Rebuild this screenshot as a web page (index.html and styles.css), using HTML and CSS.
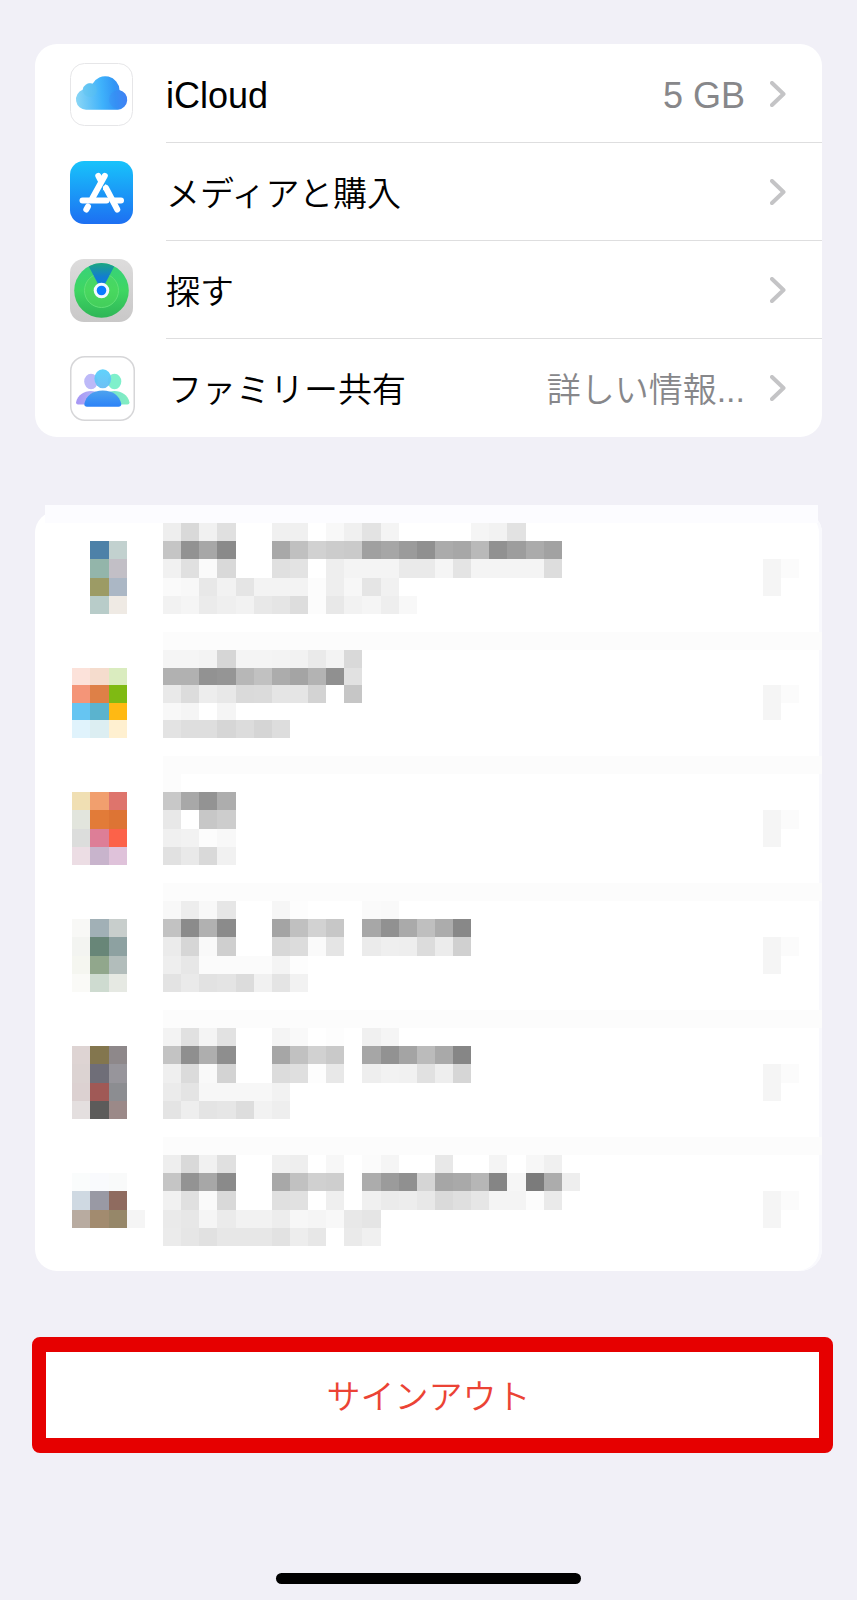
FILE: index.html
```html
<!DOCTYPE html>
<html lang="ja">
  <head>
    <meta charset="UTF-8" />
    <meta name="viewport" content="width=device-width, initial-scale=1.0" />
    <title>Apple ID</title>
    <link rel="stylesheet" href="styles.css">
  </head>
  <body>
    <main class="settings">
      <!-- Services -->
      <nav class="card services">
        <a class="service" href="#icloud">
          <svg class="app-icon" viewBox="0 0 63 63" aria-hidden="true">
            <defs>
              <linearGradient id="cloud" x1="6" y1="36" x2="58" y2="32" gradientUnits="userSpaceOnUse">
                <stop offset="0" stop-color="#8ad6f5" />
                <stop offset="0.5" stop-color="#3fb2fb" />
                <stop offset="0.75" stop-color="#3296f5" />
                <stop offset="1" stop-color="#4380f4" />
              </linearGradient>
            </defs>
            <rect x="0.5" y="0.5" width="62" height="62" rx="14" fill="#fff" stroke="#e6e6e8" />
            <path d="M16 46.700A10.300 10.300 0 0 1 12.600 26.800A7.600 7.600 0 0 1 22.600 20.800A14.300 14.300 0 0 1 49.500 27A10 10 0 0 1 48 46.700Z" fill="url(#cloud)" />
            <circle cx="20" cy="27" r="7" fill="#5cc4ec" opacity="0.35" />
            <circle cx="48" cy="36.500" r="9" fill="#3e7ff2" opacity="0.25" />
          </svg>
          <span class="name latin">iCloud</span>
          <span class="value latin">5 GB</span>
          <svg class="chevron" viewBox="0 0 16 26" aria-hidden="true"><path d="M2 2L13.500 13L2 24" /></svg>
        </a>
        <a class="service" href="#media">
          <svg class="app-icon" viewBox="0 0 63 63" aria-hidden="true">
            <defs>
              <linearGradient id="store" x1="0" y1="0" x2="0" y2="1">
                <stop offset="0" stop-color="#18c3fb" />
                <stop offset="1" stop-color="#1d6ff2" />
              </linearGradient>
            </defs>
            <rect width="63" height="63" rx="14" fill="url(#store)" />
            <g fill="none" stroke="#fff" stroke-width="6" stroke-linecap="round">
              <path d="M34.800 14.800L22.500 37" />
              <path d="M28.300 14.800L30.500 19" />
              <path d="M18 45.500L16.300 48.500" />
              <path d="M12.500 39.500H36.500" />
              <path d="M44 39.500H51" />
              <path d="M36 27L47.300 48.500" />
            </g>
            <path d="M32.600 29.500L35.500 23L39 27Z" fill="#fff" />
          </svg>
          <span class="name">メディアと購入</span>
          <svg class="chevron" viewBox="0 0 16 26" aria-hidden="true"><path d="M2 2L13.500 13L2 24" /></svg>
        </a>
        <a class="service" href="#find">
          <svg class="app-icon" viewBox="0 0 63 63" aria-hidden="true">
            <defs>
              <linearGradient id="plate" x1="0" y1="0" x2="0" y2="1">
                <stop offset="0" stop-color="#dddcdc" />
                <stop offset="1" stop-color="#c9c8c8" />
              </linearGradient>
              <linearGradient id="radar" x1="0" y1="0" x2="0" y2="1">
                <stop offset="0" stop-color="#37d27b" />
                <stop offset="0.5" stop-color="#3fd662" />
                <stop offset="1" stop-color="#2fb657" />
              </linearGradient>
              <linearGradient id="beam" x1="0" y1="0" x2="0" y2="1">
                <stop offset="0" stop-color="#1ca583" />
                <stop offset="0.5" stop-color="#127dd0" />
                <stop offset="1" stop-color="#0d76ea" />
              </linearGradient>
            </defs>
            <rect width="63" height="63" rx="14" fill="url(#plate)" />
            <circle cx="31.500" cy="31.500" r="27.300" fill="url(#radar)" />
            <circle cx="31.500" cy="31.500" r="17" fill="#51d95b" fill-opacity="0.5" stroke="#62e077" />
            <path d="M31.500 31.500L18.800 7.400A27.300 27.300 0 0 1 44.200 7.400Z" fill="url(#beam)" />
            <circle cx="31.500" cy="31.500" r="7.800" fill="#f4f9ff" />
            <circle cx="31.500" cy="31.500" r="4.800" fill="#0a7bff" />
          </svg>
          <span class="name">探す</span>
          <svg class="chevron" viewBox="0 0 16 26" aria-hidden="true"><path d="M2 2L13.500 13L2 24" /></svg>
        </a>
        <a class="service" href="#family">
          <svg class="app-icon app-icon-large" viewBox="0 0 65 65" aria-hidden="true">
            <defs>
              <linearGradient id="head" x1="0" y1="0" x2="0" y2="1">
                <stop offset="0" stop-color="#58d0fb" />
                <stop offset="1" stop-color="#67bdf4" />
              </linearGradient>
              <linearGradient id="body" x1="0" y1="0" x2="0" y2="1">
                <stop offset="0" stop-color="#4ea3ee" />
                <stop offset="1" stop-color="#2c83f8" />
              </linearGradient>
              <linearGradient id="left" x1="0" y1="0" x2="1" y2="0">
                <stop offset="0" stop-color="#a695f5" />
                <stop offset="1" stop-color="#b9c2f5" />
              </linearGradient>
              <linearGradient id="right" x1="0" y1="0" x2="1" y2="0">
                <stop offset="0" stop-color="#70dfd3" />
                <stop offset="1" stop-color="#84eec0" />
              </linearGradient>
            </defs>
            <rect x="0.750" y="0.750" width="63.500" height="63.500" rx="14" fill="#fff" stroke="#d6d6d8" stroke-width="1.500" />
            <ellipse cx="21" cy="25.500" rx="6.800" ry="7.800" fill="#bdb9f8" />
            <ellipse cx="44.500" cy="25.500" rx="6.800" ry="7.800" fill="#7ff0cb" />
            <path d="M8 48.500Q6 48.500 6 46.500C7.500 39 14 35 21 35C27 35 32 38 34 43V48.500Z" fill="url(#left)" />
            <path d="M57.500 48.500Q59.500 48.500 59.500 46.500C58 39 51.500 35 44.500 35C38.500 35 33.500 38 31.500 43V48.500Z" fill="url(#right)" />
            <ellipse cx="32.800" cy="22.700" rx="8.400" ry="9.500" fill="url(#head)" opacity="0.950" />
            <path d="M17 50.700Q14.300 50.700 14.300 48C16 39.500 23 34.500 32.800 34.500C42.500 34.500 49.500 39.500 51.300 48Q51.300 50.700 48.500 50.700Z" fill="url(#body)" />
          </svg>
          <span class="name">ファミリー共有</span>
          <span class="value">詳しい情報...</span>
          <svg class="chevron" viewBox="0 0 16 26" aria-hidden="true"><path d="M2 2L13.500 13L2 24" /></svg>
        </a>
      </nav>

      <!-- Signed-in devices, filled in by script.js -->
      <section class="card devices">
        <div class="devices-top"></div>
        <ul id="device-list"></ul>
      </section>

      <button class="sign-out" type="button">サインアウト</button>
      <div class="home-indicator"></div>
    </main>
    <script src="script.js"></script>
  </body>
</html>
```

FILE: styles.css
```css
/* General Body and Layout Styles */
* {
  box-sizing: border-box;
}

body {
  margin: 0;
  background-color: #f1f0f7;
  color: #000;
  font-family: "Liberation Sans", "Noto Sans CJK JP", sans-serif;
  font-size: 34px;
  font-weight: 350;
  line-height: 48px;
}

.settings {
  display: flex;
  flex-direction: column;
  padding: 44px 35px 16px;
}

.card {
  background-color: #fff;
  border-radius: 22px;
}

/* Services */
.services {
  padding-top: 1px;
}

.service {
  display: flex;
  align-items: center;
  height: 98px;
  padding: 0 36px 0 35px;
  color: inherit;
  text-decoration: none;
  /* Separator starts under the text, not under the icon */
  background: linear-gradient(#dededf, #dededf) 131px 100% / 100% 1px no-repeat;
}

.service:last-child {
  background: none;
}

.app-icon {
  flex: none;
  width: 63px;
  height: 63px;
  margin-right: 33px;
}

.app-icon-large {
  width: 65px;
  height: 65px;
}

.name {
  flex: 1;
  padding-top: 4px;
}

.value {
  padding-top: 4px;
  margin-right: 25px;
  color: #87878a;
}

.latin {
  font-size: 36px;
}

.chevron {
  width: 16px;
  height: 26px;
  fill: none;
  stroke: #c4c4c6;
  stroke-width: 4;
  stroke-linecap: round;
  stroke-linejoin: round;
}

/* Signed-in devices */
.devices {
  position: relative;
  margin-top: 74px;
  padding: 12px 0 7px;
  box-shadow: inset -3px 0 #f9f9fd;
}

.devices-top {
  position: absolute;
  top: -6px;
  left: 10px;
  right: 4px;
  height: 18px;
  background-color: #fcfcff;
}

#device-list {
  margin: 0;
  padding: 0;
  list-style: none;
}

.device {
  display: flex;
  height: 127px;
  padding: 0 23px 0 37px;
  background: linear-gradient(#fcfcfc, #fcfcfc) 128px 100% / 100% 18px no-repeat;
}

.device:nth-child(2) {
  height: 124px;
}

.device:last-child {
  height: 109px;
  background: none;
}

.mosaic {
  flex: none;
  height: 91px;
  shape-rendering: crispEdges;
}

.device:nth-child(2) .mosaic {
  height: 88px;
}

.mosaic-icon {
  width: 73px;
  margin-right: 18px;
}

.mosaic-text {
  width: 417px;
}

.mosaic-arrow {
  width: 36px;
  margin-left: auto;
}

/* Sign out */
.sign-out {
  height: 116px;
  margin: 66px -11px 0 -3px;
  padding: 4px 8px 0 0;
  border: solid #e60000;
  border-width: 15px 14px;
  border-radius: 8px;
  background-color: #fff;
  color: #eb4335;
  font: inherit;
  cursor: pointer;
}

.home-indicator {
  align-self: center;
  width: 305px;
  height: 11px;
  margin-top: 120px;
  border-radius: 6px;
  background-color: #000;
}
```

FILE: script.js
```javascript
// Each line is one row of cells, "-" leaves a cell empty.
// Two digits are a gray level, six digits are a full colour.
const devices = [
  {
    icon: [
      "",
      "- 4d81a8 c2d1cf",
      "- 93b5aa c2bfc6",
      "- 9c9b65 abb7c5",
      "- b8ccc9 efeae4",
    ],
    text: [
      "ee d9 f1 e0 - - f0 f0 - f8 f0 e3 f4 - - - - f5 f2 e2",
      "c5 92 a7 8a - - a8 c0 d1 cc ca a0 a6 9b 90 ab a7 b9 91 9d ab a2",
      "f1 e0 fa d9 - - e0 e3 - ee f4 f4 f4 ea ea f5 e4 f4 f4 f4 f4 dd",
      "fa f8 e8 f2 e5 f3 f3 f3 fc ee f7 e5 f1",
      "f2 f5 eb ef f2 e8 e5 dd fc e8 f2 f5 ee f8",
    ],
  },
  {
    icon: [
      "",
      "fce2da f5dccd daecbf",
      "f49578 de8047 7fba13",
      "66c5f2 5bb3ce ffb913",
      "e0f3fc dceef2 fff0d0",
    ],
    text: [
      "f5 f5 f3 d6 f4 f4 f3 f2 ea f3 d9",
      "b1 b1 92 95 b7 c1 ac a4 b3 90 e1",
      "e9 dc ed e8 da db e5 e5 d3 - c6",
      "f8 f5 - f5",
      "e3 de de d6 dc d5 dd",
    ],
  },
  {
    icon: [
      "",
      "f0dfb3 f19f6e de746c",
      "e2e5dd e27b38 dd7434",
      "dcdddc dd7e97 fc6249",
      "ecdde4 c8b4cc dfc2da",
    ],
    text: [
      "fc",
      "c8 a8 93 ad",
      "e8 - c7 cd",
      "f0 f2 fc f8",
      "e1 e9 d9 f1",
    ],
  },
  {
    icon: [
      "",
      "f8f8f6 a1b0b6 c8cecc",
      "f3f4f1 688678 8da1a1",
      "f5f6f0 91a78c b2bdbb",
      "fafaf7 cedbd0 e6e9e3",
    ],
    text: [
      "f8 ed f8 e6 - - f6 fd - - - fa f9",
      "c2 8b b1 8b - - a4 c0 d2 c7 - a7 91 aa bf ac 88",
      "eb d6 f9 cf - - d8 dc fa e5 - eb ef ee dc ec d0",
      "ee e7 fb fb fb fb f4 fd",
      "e3 ea e2 e4 dc f1 e4 f2",
    ],
  },
  {
    icon: [
      "",
      "ded4d3 83764e 8e888a",
      "dcd3d2 6f6e78 97959b",
      "dcd1d1 a05956 8c8d91",
      "e4dfdf 5c5b5a 9b8988",
    ],
    text: [
      "f3 e1 f4 e2 - - f4 f9 - fd - f0 f5",
      "c3 8f ae 8e - - a6 c1 d1 c9 - a6 92 a4 bb a9 86",
      "ef db f9 d3 - - dc df fd e8 - ee f2 f1 e1 ee d6",
      "eb e4 f7 f7 f7 f7 f2",
      "e4 ee e4 e6 dd f2 ee",
    ],
  },
  {
    icon: [
      "",
      "fafcfc f9fafd f9fafa",
      "cfd9e2 9999a4 8f6b5f",
      "b8aba0 a28b6f 968769 f5f5f5",
    ],
    text: [
      "ee d9 f1 e0 - - f0 ee - f7 - fb f5 - - e8 - - f4 - f7 f0",
      "c5 93 a7 8a - - a8 c1 d0 ce - ac 9b 90 d5 a6 a9 b6 85 f6 7b ac ee",
      "f1 e0 fa d9 - - e0 e1 - ef - f0 eb ed e8 da df e6 f4 f4 fc ea",
      "ea e7 f5 eb f2 f2 ed f7 f5 f8 e8 e5",
      "eb e6 e1 e7 e7 e7 e2 ed e7 - ea f0",
    ],
  },
];

const arrow = ["", "", "f5 fb", "f5"];

function mosaic(name, columns, rows) {
  let cells = "";
  rows.forEach((row, y) => {
    row.split(" ").forEach((value, x) => {
      if (value === "" || value === "-") return;
      const color = value.length === 2 ? value.repeat(3) : value;
      cells += `<rect x="${x}" y="${y}" width="1" height="1" fill="#${color}" />`;
    });
  });
  return `<svg class="mosaic mosaic-${name}" viewBox="0 0 ${columns} 5" preserveAspectRatio="none" aria-hidden="true">${cells}</svg>`;
}

const list = document.getElementById("device-list");

devices.forEach((device) => {
  const li = document.createElement("li");
  li.className = "device";
  li.innerHTML =
    mosaic("icon", 4, device.icon) +
    mosaic("text", 23, device.text) +
    mosaic("arrow", 2, arrow);
  list.appendChild(li);
});
```
